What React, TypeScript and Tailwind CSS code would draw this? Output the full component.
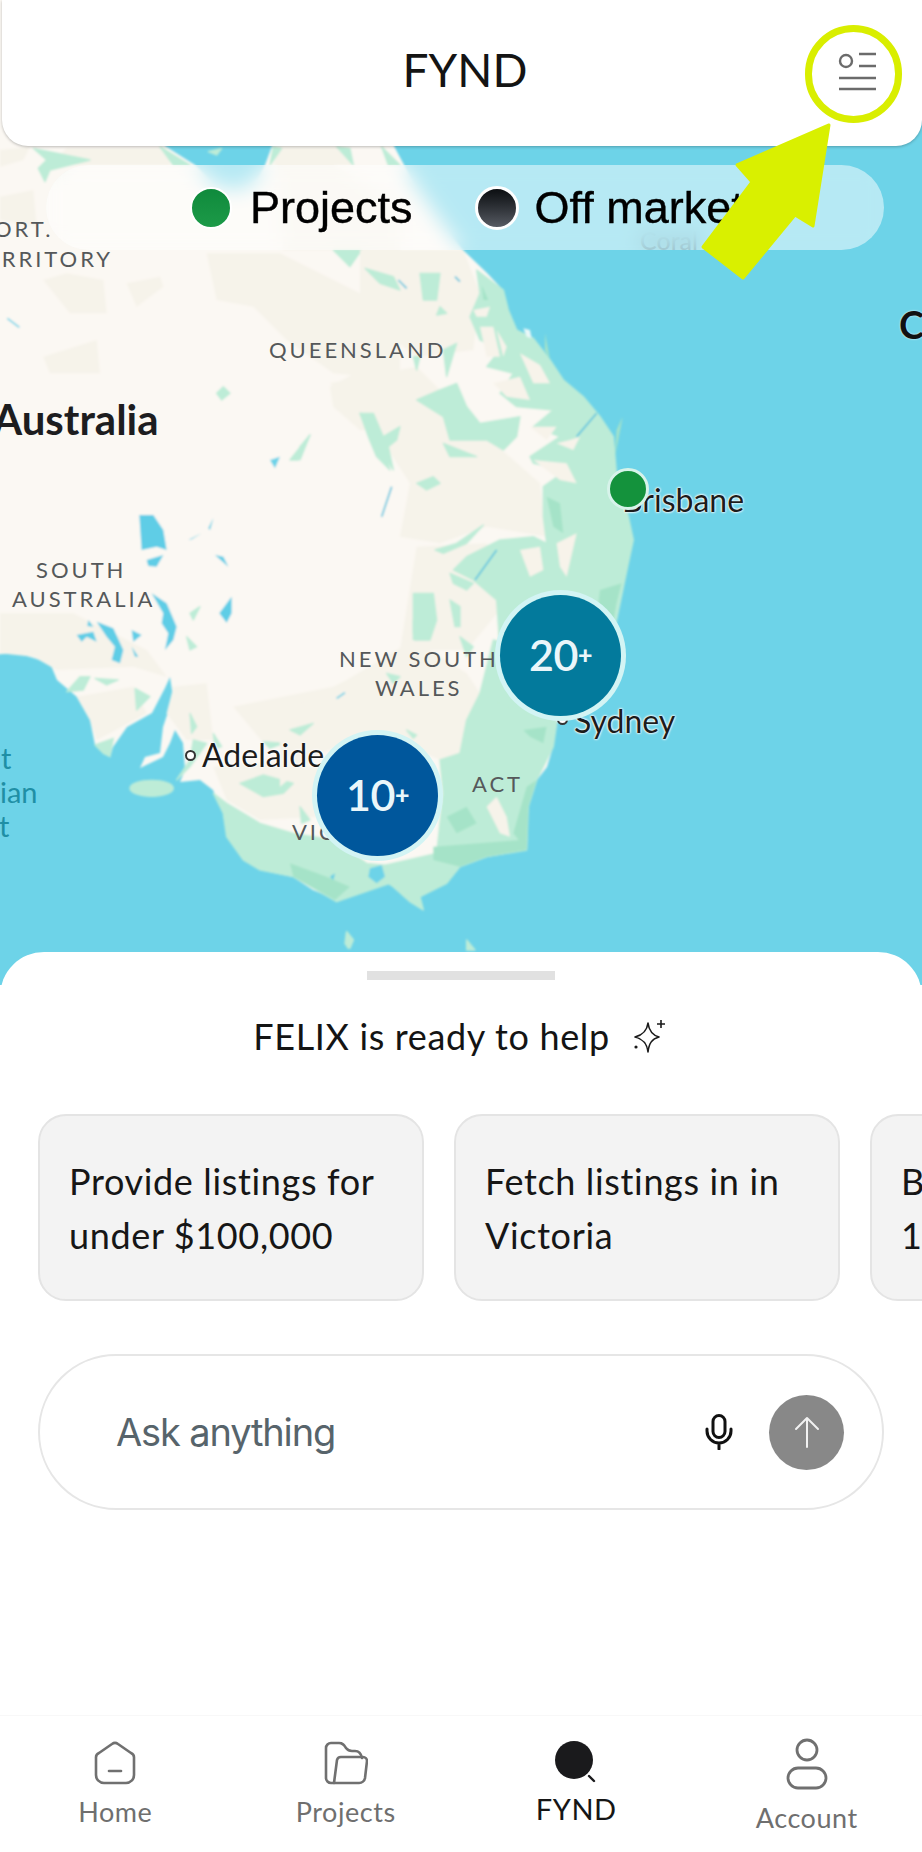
import React from 'react';

const futura = 'font-["Lato",sans-serif]';

const labelHalo = '[text-shadow:0_0_2px_#fff,0_0_2px_#fff,0_0_3px_#fff]';
const stateLabel = 'text-[22px] tracking-[0.135em] text-[#55585a]';

// coordinates are in page pixels; the groups are scaled from traced crops
const MapDrawing: React.FC = () => (
  <svg viewBox="0 0 922 985" className="absolute top-0 left-0 h-[985px] w-[922px]">
    <defs>
      <filter id="soft" x="-5%" y="-5%" width="110%" height="110%">
        <feGaussianBlur stdDeviation="1.3" />
      </filter>
    </defs>
    <rect width="922" height="985" fill="#6dd3e8" />
    <rect width="12" height="160" fill="#fbf8f3" />
    <g filter="url(#soft)">
      {/* land */}
      <path
        fill="#fbf8f3"
        d="M-10 100 L165 100 L165 146 L195 165 L215 185 L240 190 L258 178 L265 165 L272 146 L272 100 L390 100 L394 146 L412 180 L440 220 L463 250 L487 273 L503 290 L508 310 L517 330 L533 338 L550 360 L563 380 L583 397 L600 417 L613 437 L615 463 L617 477 L628 517 L633 540 L628 563 L620 603 L613 640 L590 690 L557 723 L553 747 L547 767 L537 780 L528 807 L527 850 L487 857 L460 867 L447 883 L420 897 L423 910 L410 902 L393 887 L383 880 L378 867 L367 873 L350 885 L337 900 L313 890 L293 877 L260 870 L243 860 L227 837 L223 813 L213 790 L200 780 L180 782 L185 770 L183 743 L175 730 L170 743 L163 757 L140 768 L145 757 L160 753 L163 727 L173 697 L170 677 L165 688 L152 713 L127 727 L113 747 L110 757 L95 745 L90 720 L77 697 L57 680 L50 663 L17 653 L-10 655 Z"
      />

      {/* top-left crop */}
      <g transform="translate(0 140) scale(0.3333)">
        <g fill="#f6f3ea">
          <path d="M620 340 L840 340 L1200 520 L1200 720 L1000 700 L860 600 L760 500 L650 480 Z" />
          <path d="M990 740 L1100 680 L1200 690 L1200 880 L1080 870 L1000 800 Z" />
          <path d="M130 650 L290 600 L300 700 L150 700 Z" />
          <path d="M130 420 L200 400 L310 420 L320 520 L210 520 Z" />
          <path d="M380 430 L480 410 L490 440 L410 500 Z" />
          <path d="M0 170 L100 150 L110 260 L0 240 Z" />
          <path d="M0 30 L90 20 L70 60 L0 80 Z" />
          <path d="M200 25 L500 25 L510 75 L150 75 Z" />
          <path d="M840 20 L1010 20 L1060 75 L820 75 Z" />
          <path d="M1000 75 L1200 200 L1200 330 L850 330 L830 75 Z" />
        </g>
        <g fill="#bdecd7" stroke="#bdecd7" strokeWidth="4" strokeLinejoin="round">
          <path d="M100 25 L270 60 L150 90 L135 125 L115 85 L140 60 Z" />
          <path d="M1000 330 L1085 330 L1050 380 Z" />
          <path d="M1095 385 L1180 410 L1140 420 Z" />
          <path d="M650 760 L670 740 L690 760 L665 780 Z" />
          <path d="M870 960 L930 885 L895 960 Z" />
          <path d="M1080 820 L1140 820 L1150 890 L1200 870 L1150 930 L1170 990 L1130 950 L1105 890 Z" />
          <path d="M480 20 L570 75 L520 75 Z" />
          <path d="M810 75 L845 25 L820 20 Z" />
          <path d="M1010 20 L1050 25 L1060 75 Z" />
          <path d="M1145 20 L1200 75 L1165 75 Z" />
          <path d="M625 35 L665 25 L650 45 Z" />
        </g>
        <path d="M810 960 L840 950 L825 985 Z" fill="#6dd3e8" />
        <path d="M22 535 L58 562" stroke="#6dd3e8" strokeWidth="5" />
      </g>

      {/* east coast crop */}
      <g transform="translate(300 250) scale(0.3333)">
        <g fill="#f6f3ea">
          <path d="M90 400 L350 350 L560 560 L720 700 L740 860 L560 830 L420 880 L300 860 L330 700 L200 500 Z" />
          <path d="M180 0 L490 0 L540 130 L520 300 L350 320 L180 190 Z" />
          <path d="M350 890 L560 880 L600 1080 L500 1200 L300 1200 Z" />
        </g>
        <g fill="#bdecd7" stroke="#bdecd7" strokeWidth="4" strokeLinejoin="round">
          <path d="M530 60 L610 120 L625 180 L650 240 L700 265 L750 330 L790 390 L850 440 L900 500 L940 560 L950 680 L985 800 L1000 870 L985 940 L960 1060 L930 1200 L600 1200 L590 1050 L520 990 L460 960 L500 920 L600 870 L700 860 L740 880 L730 800 L730 710 L800 660 L700 640 L690 620 L780 560 L700 530 L760 480 L650 470 L600 430 L640 370 L560 350 L600 300 L540 270 L510 200 L540 130 Z" />
          <path d="M350 450 L420 420 L470 400 L500 470 L540 520 L660 500 L650 560 L610 600 L560 570 L450 570 L430 500 Z" />
          <path d="M430 580 L530 620 L450 620 Z" />
          <path d="M180 490 L220 490 L250 560 L300 530 L290 570 L265 590 L280 660 L240 600 Z" />
          <path d="M350 700 L400 680 L420 700 L380 720 Z" />
          <path d="M360 70 L420 70 L410 150 L370 150 Z" />
          <path d="M195 55 L280 80 L300 120 L240 100 Z" />
          <path d="M420 170 L440 190 L410 195 Z" />
          <path d="M340 320 L360 320 L350 360 Z" />
          <path d="M430 300 L470 280 L440 380 Z" />
          <path d="M340 1030 L400 1030 L410 1110 L390 1170 L340 1170 L340 1100 Z" />
          <path d="M450 1050 L480 1070 L480 1130 L465 1130 Z" />
          <path d="M450 970 L520 1000 L500 1020 L460 1000 Z" />
          <path d="M405 900 L470 880 L550 825 L500 880 L430 910 Z" />
          <path d="M0 590 L30 555 L0 630 Z" />
        </g>
        <g fill="#f7f3ea">
          <path d="M660 310 L720 345 L750 400 L700 400 Z" />
          <path d="M520 180 L570 170 L560 200 L530 200 Z" />
          <path d="M540 230 L580 230 L600 320 L560 320 Z" />
          <path d="M590 240 L620 290 L610 320 Z" />
          <path d="M690 530 L770 530 L740 570 Z" />
          <path d="M770 580 L810 570 L840 560 L820 600 Z" />
          <path d="M700 630 L800 640 L830 700 L780 690 Z" />
          <path d="M770 880 L830 850 L800 980 L780 950 Z" />
          <path d="M660 900 L720 890 L730 960 L690 980 Z" />
          <path d="M580 400 L660 380 L690 450 L620 440 Z" />
        </g>
        <g fill="#a5e3c8">
          <path d="M735 250 L750 330 L735 300 Z" />
          <path d="M968 500 L945 620 L950 540 Z" />
          <path d="M545 105 L565 150 L550 150 Z" />
          <path d="M900 1020 L965 1000 L950 1060 L925 1200 L890 1100 Z" />
          <path d="M740 740 L780 760 L790 850 L760 830 Z" />
        </g>
        <g stroke="#5cc4de" strokeWidth="5" fill="none">
          <path d="M830 560 L890 490" />
          <path d="M245 800 L275 710" />
          <path d="M525 990 L590 900" />
          <path d="M465 80 L480 95" />
          <path d="M295 90 L320 115" />
        </g>
        <path d="M670 235 L690 240 L695 265 L680 260 Z" fill="#eaf8f8" />
      </g>

      {/* south west crop */}
      <g transform="translate(0 500) scale(0.3333)">
        <g fill="#f6f3ea">
          <path d="M230 590 L400 560 L440 640 L330 700 L290 720 L270 660 Z" />
          <path d="M0 340 L220 340 L440 450 L500 530 L400 500 L170 510 L100 470 L0 460 Z" />
          <path d="M520 560 L620 550 L640 720 L560 720 L500 640 Z" />
          <path d="M640 800 L760 790 L960 800 L960 950 L780 960 L680 900 Z" />
          <path d="M700 620 L1000 560 L1200 500 L1200 700 L800 740 Z" />
        </g>
        <g fill="#bdecd7" stroke="#bdecd7" strokeWidth="4" strokeLinejoin="round">
          <path d="M200 575 L240 530 L270 530 L250 570 Z" />
          <path d="M285 535 L355 540 L320 555 Z" />
          <path d="M405 565 L450 590 L410 630 Z" />
          <path d="M285 735 L340 715 L330 770 L310 760 Z" />
          <path d="M570 340 L600 320 L580 360 Z" />
          <path d="M560 410 L590 440 L570 450 Z" />
          <path d="M570 640 L590 680 L575 700 Z" />
          <path d="M640 700 L665 740 L645 745 Z" />
          <path d="M530 840 L570 800 L620 730 L580 720 L570 780 Z" />
          <path d="M720 850 L790 825 L880 850 L850 880 L790 890 Z" />
          <path d="M870 690 L940 675 L910 705 Z" />
          <path d="M790 725 L850 730 L810 745 Z" />
          <path d="M900 920 L930 960 L905 970 Z" />
          <path d="M640 880 L680 910 L780 970 L880 1000 L1000 1020 L1100 1090 L1200 1100 L1200 1140 L1010 1205 L880 1130 L780 1110 L730 1080 L680 1010 L670 940 Z" />
          <ellipse cx="455" cy="865" rx="65" ry="24" />
          <path d="M1040 1295 L1060 1320 L1045 1345 L1035 1330 Z" />
        </g>
        <path d="M870 1090 L980 1130 L1050 1160 L1005 1200 L880 1130 Z" fill="#a5e3c8" />
        <g fill="#5fcde6">
          <path d="M418 45 L460 45 L490 90 L500 150 L470 140 L425 150 Z" />
          <path d="M440 180 L490 165 L470 200 L445 198 Z" />
          <path d="M645 165 L670 170 L685 200 Z" />
          <path d="M565 120 L605 100 L575 118 Z" />
          <path d="M625 85 L640 55 L630 90 Z" />
          <path d="M455 280 L500 310 L530 380 L520 420 L495 450 L505 400 L485 370 L490 340 Z" />
          <path d="M695 290 L695 340 L680 368 L658 340 Z" />
          <path d="M290 365 L340 385 L370 450 L360 490 L335 480 L345 440 L320 410 Z" />
          <path d="M230 405 L280 395 L290 425 L260 410 L245 425 Z" />
          <path d="M395 390 L425 405 L400 425 Z" />
          <path d="M395 440 L415 470 L405 470 Z" />
          <path d="M265 360 L280 380 L262 378 Z" />
          <path d="M1010 595 L1038 575 L1020 598 Z" />
        </g>
      </g>

      {/* south east crop */}
      <g transform="translate(280 620) scale(0.3333)">
        <g fill="#f6f3ea">
          <path d="M0 280 L200 180 L400 60 L560 160 L600 220 L560 300 L540 400 L480 420 L300 340 L120 400 L0 500 Z" />
        </g>
        <g fill="#bdecd7" stroke="#bdecd7" strokeWidth="4" strokeLinejoin="round">
          <path d="M600 220 L640 60 L760 90 L830 310 L700 270 Z" />
          <path d="M600 220 L700 270 L830 310 L820 380 L770 480 L745 560 L740 690 L620 710 L540 740 L500 790 L420 830 L430 870 L390 845 L340 800 L310 780 L295 740 L470 700 L490 520 L480 420 L540 400 L560 300 Z" />
          <path d="M400 0 L460 0 L440 40 L400 40 Z" />
          <path d="M30 330 L100 310 L60 345 Z" />
          <path d="M320 160 L360 170 L340 190 Z" />
          <path d="M380 330 L410 345 L400 355 Z" />
          <path d="M540 50 L580 80 L560 110 Z" />
          <path d="M200 935 L220 960 L210 985 L198 965 Z" />
          <path d="M560 960 L585 990 L560 990 Z" />
        </g>
        <g fill="#a5e3c8">
          <path d="M700 640 L740 500 L770 480 L745 560 L740 690 Z" />
          <path d="M460 680 L720 660 L740 690 L620 710 L540 740 L460 720 Z" />
          <path d="M500 590 L560 560 L590 610 L530 640 Z" />
          <path d="M730 330 L800 320 L790 370 L750 350 Z" />
        </g>
        <path d="M620 560 L650 530 L680 590 L690 650 L660 640 Z" fill="#f6f3ea" />
        <path d="M270 745 L305 735 L315 770 L290 790 L265 770 Z" fill="#6dd3e8" />
        <path d="M150 770 L165 760 L160 780 Z" fill="#5fcde6" />
        <path d="M170 235 L195 218" stroke="#5fcde6" strokeWidth="5" />
      </g>
    </g>
  </svg>
);

const MapLabel: React.FC<{ className: string; children: React.ReactNode }> = ({ className, children }) => (
  <span className={`absolute whitespace-nowrap ${futura} ${className}`}>{children}</span>
);

const CityDot: React.FC<{ className: string }> = ({ className }) => (
  <div className={`absolute h-[11px] w-[11px] rounded-full border-2 border-[#333] bg-white ${className}`} />
);

const Cluster: React.FC<{ className: string; label: string }> = ({ className, label }) => (
  <div className={`absolute flex h-[121px] w-[121px] items-center justify-center rounded-full shadow-[0_0_0_5px_#d3f4f4] ${className}`}>
    <span className={`${futura} text-[43px] font-semibold tracking-[-0.01em] text-[#eaf6fa]`}>
      {label}
      <span className="align-[7px] text-[25px] font-black">+</span>
    </span>
  </div>
);

const tabs = [
  {
    label: 'Home',
    className: 'mt-[10px] text-[27px] text-[#6f6f6f]',
    icon: (
      <svg width="44" height="44" viewBox="0 0 44 44" fill="none" stroke="#707070" strokeWidth="2.6" strokeLinecap="round" strokeLinejoin="round">
        <path d="M19 3 a5 5 0 0 1 6 0 L38 12 a5 5 0 0 1 3 5 V34 a8 8 0 0 1-8 8 H11 a8 8 0 0 1-8-8 V17 a5 5 0 0 1 3-5 Z" />
        <path d="M16 30 H28" />
      </svg>
    ),
  },
  {
    label: 'Projects',
    className: 'mt-[10px] text-[27px] text-[#6f6f6f]',
    icon: (
      <svg width="44" height="44" viewBox="0 0 44 44" fill="none" stroke="#707070" strokeWidth="2.6" strokeLinecap="round" strokeLinejoin="round">
        <path d="M10 42 H7 a5 5 0 0 1-5-5 V7 a5 5 0 0 1 5-5 h8 c4 0 5 2 7 5 c1.500 2 3 3 6 3 h3 c4 0 6 2 7 7" />
        <path d="M13 19 a4 4 0 0 1 4-3 H39 a4 4 0 0 1 4 4 L41 37 a6 6 0 0 1-6 5 H10 Z" />
      </svg>
    ),
  },
  {
    label: 'FYND',
    className: 'mt-[7px] text-[29px] text-[#161616]',
    icon: (
      <svg width="44" height="44" viewBox="0 0 44 44" fill="none">
        <circle cx="20" cy="19" r="19" fill="#1a1a1c" />
        <path d="M35 35 L40 40" stroke="#1a1a1c" strokeWidth="2.4" strokeLinecap="round" />
      </svg>
    ),
  },
  {
    label: 'Account',
    className: 'mt-[16px] text-[27px] text-[#6f6f6f]',
    icon: (
      <svg className="-mt-[3px]" width="44" height="52" viewBox="0 0 44 52" fill="none" stroke="#707070" strokeWidth="2.8">
        <circle cx="22" cy="12" r="10" />
        <rect x="3" y="30" width="38" height="20" rx="10" />
      </svg>
    ),
  },
];

export default function App() {
  return (
    <div className="relative h-[1852px] w-[922px] overflow-hidden bg-white">
      {/* map area */}
      <div className="relative h-[985px] overflow-hidden bg-[#6dd3e8]">
        <MapDrawing />

        <MapLabel className={`left-[-6px] top-[212px] ${stateLabel}`}>ORT.</MapLabel>
        <MapLabel className={`left-[-14px] top-[242px] ${stateLabel}`}>ERRITORY</MapLabel>
        <MapLabel className={`left-[269px] top-[333px] ${stateLabel}`}>QUEENSLAND</MapLabel>
        <MapLabel className="left-[-7px] top-[388px] text-[42px] font-bold text-[#1d1d1f]">Australia</MapLabel>
        <MapLabel className={`left-[36px] top-[553px] ${stateLabel}`}>SOUTH</MapLabel>
        <MapLabel className={`left-[12px] top-[582px] ${stateLabel}`}>AUSTRALIA</MapLabel>
        <MapLabel className={`left-[339px] top-[642px] ${stateLabel}`}>NEW SOUTH</MapLabel>
        <MapLabel className={`left-[375px] top-[671px] ${stateLabel}`}>WALES</MapLabel>
        <MapLabel className={`left-[472px] top-[767px] ${stateLabel}`}>ACT</MapLabel>
        <MapLabel className={`left-[292px] top-[815px] ${stateLabel}`}>VIC</MapLabel>
        <MapLabel className="left-[1px] top-[736px] text-[29px] text-[#1f8fa5]">t</MapLabel>
        <MapLabel className="left-[0px] top-[770px] text-[29px] text-[#1f8fa5]">ian</MapLabel>
        <MapLabel className="left-[-1px] top-[804px] text-[29px] text-[#1f8fa5]">t</MapLabel>
        <MapLabel className="left-[640px] top-[222px] text-[25px] font-medium text-[#2f6f80]">Coral</MapLabel>
        <MapLabel className="left-[899px] top-[296px] text-[38px] font-bold text-[#111] [text-shadow:0_0_2px_#fff]">C</MapLabel>

        <CityDot className="left-[185px] top-[750px]" />
        <MapLabel className={`left-[202px] top-[731px] text-[32px] text-[#1c1c1c] ${labelHalo}`}>Adelaide</MapLabel>
        <CityDot className="left-[557px] top-[714px]" />
        <MapLabel className={`left-[574px] top-[697px] text-[32px] text-[#1c1c1c] ${labelHalo}`}>Sydney</MapLabel>
        <CityDot className="left-[610px] top-[491px]" />
        <MapLabel className={`left-[622px] top-[476px] text-[32px] text-[#1c1c1c] ${labelHalo}`}>Brisbane</MapLabel>

        <div className="absolute left-[607px] top-[468px] h-[42px] w-[42px] rounded-full border-[3px] border-[#d7f3ea] bg-[#14923c]" />
        <Cluster className="left-[500px] top-[595px] bg-[#037a9c]" label="20" />
        <Cluster className="left-[317px] top-[735px] bg-[#00579c]" label="10" />

        {/* top bar */}
        <header className="relative z-10 ml-[2px] flex h-[146px] items-center justify-center rounded-b-[26px] bg-white pb-[7px] pl-[6px] shadow-[0_1px_3px_rgba(0,0,0,0.25)]">
          <h1 className={`${futura} text-[46px] leading-none text-[#141414]`}>FYND</h1>
          <svg className="absolute right-[44px] top-[52px]" width="40" height="40" viewBox="0 0 40 40" fill="none" stroke="#6b6b6b" strokeWidth="2.4">
            <circle cx="8" cy="9" r="6" />
            <path d="M21 2 H38 M21 14 H38 M1 26 H38 M1 37 H38" />
          </svg>
        </header>

        {/* legend pill */}
        <div className="absolute left-[46px] top-[165px] z-10 flex h-[85px] w-[838px] items-center rounded-full bg-white/50 pl-[144px] backdrop-blur-[10px]">
          <span className="h-[42px] w-[42px] rounded-full border-[2px] border-white bg-gradient-to-b from-[#0f8a3c] to-[#1c9a48]" />
          <span className="ml-[18px] font-['Liberation_Sans',sans-serif] text-[45px] text-black [-webkit-text-stroke:0.4px_black]">Projects</span>
          <span className="ml-[62px] h-[44px] w-[44px] rounded-full border-[3px] border-white bg-gradient-to-b from-[#0c0f12] to-[#575b63]" />
          <span className="ml-[16px] font-['Liberation_Sans',sans-serif] text-[45px] text-black [-webkit-text-stroke:0.4px_black]">Off market</span>
        </div>
      </div>

      {/* highlight ring and arrow */}
      <div className="absolute left-[805px] top-[25px] z-20 h-[98px] w-[97px] rounded-full border-[7px] border-[#d9ee00]" />
      <svg className="absolute left-[700px] top-[120px] z-20" width="135" height="162" viewBox="700 120 135 162">
        <path
          d="M829 125 L813 226 L795 215 L743 278 L703 247 L752 182 L737 165 Z"
          fill="#d9f000"
          stroke="#d9f000"
          strokeWidth="3"
          strokeLinejoin="round"
        />
      </svg>

      {/* assistant sheet */}
      <section className="relative z-10 -mt-[33px] flex h-[900px] flex-col overflow-hidden rounded-t-[44px] bg-white">
        <div className="mx-auto mt-[19px] h-[9px] w-[188px] shrink-0 bg-[#e1e1e1]" />
        <div className="mt-[34px] flex items-center justify-center gap-[23px]">
          <span className={`${futura} text-[36px] leading-[44px] tracking-[0.018em] text-[#141414]`}>FELIX is ready to help</span>
          <svg width="36" height="36" viewBox="0 0 36 36" fill="none" stroke="#1a1a1a" strokeWidth="1.6" strokeLinejoin="round">
            <path d="M15 5 C16 13 19 17 26 19 C19 21 16 25 15 34 C14 25 10 21 2 19 C10 17 14 13 15 5 Z" />
            <path d="M28 2 V10 M24 6 H32" />
            <circle cx="3" cy="29" r="0.8" fill="#1a1a1a" />
          </svg>
        </div>

        <div className="mt-[56px] flex gap-[30px] pl-[38px]">
          {[
            ['Provide listings for', 'under $100,000'],
            ['Fetch listings in in', 'Victoria'],
            ['B', '1'],
          ].map(([a, b], i) => (
            <div key={i} className="flex h-[187px] w-[386px] shrink-0 flex-col justify-center rounded-[28px] border-2 border-[#e4e4e4] bg-[#f3f3f3] pl-[29px]">
              <span className={`${futura} text-[36px] leading-[54px] tracking-[0.018em] text-[#161616]`}>{a}</span>
              <span className={`${futura} text-[36px] leading-[54px] tracking-[0.018em] text-[#161616]`}>{b}</span>
            </div>
          ))}
        </div>

        <div className="mx-[38px] mt-[53px] flex h-[156px] items-center rounded-full border-2 border-[#e6e6e6] bg-white pl-[76px] pr-[38px]">
          <span className="font-['Inter',sans-serif] text-[38px] tracking-[-0.03em] text-[#57646b]">Ask anything</span>
          <svg className="ml-auto" width="28" height="36" viewBox="0 0 28 36" fill="none" stroke="#111" strokeWidth="3" strokeLinecap="round">
            <rect x="8" y="1.500" width="12" height="22" rx="6" />
            <path d="M2 15 V17 a12 12 0 0 0 24 0 V15 M14 29 V35" />
          </svg>
          <div className="ml-[36px] flex h-[75px] w-[75px] items-center justify-center rounded-full bg-[#888888]">
            <svg width="26" height="32" viewBox="0 0 26 32" fill="none" stroke="#f2f2f2" strokeWidth="2" strokeLinecap="round" strokeLinejoin="round">
              <path d="M13 2 V31 M2 13 L13 2 L24 13" />
            </svg>
          </div>
        </div>

        {/* bottom navigation */}
        <nav className="mt-auto grid h-[137px] grid-cols-4 border-t border-[#f8f8f8]">
          {tabs.map((tab) => (
            <div key={tab.label} className="flex flex-col items-center pt-[25px]">
              <div className="flex h-[44px] items-start">{tab.icon}</div>
              <span className={`${futura} leading-[34px] tracking-[0.02em] ${tab.className}`}>{tab.label}</span>
            </div>
          ))}
        </nav>
      </section>
    </div>
  );
}
